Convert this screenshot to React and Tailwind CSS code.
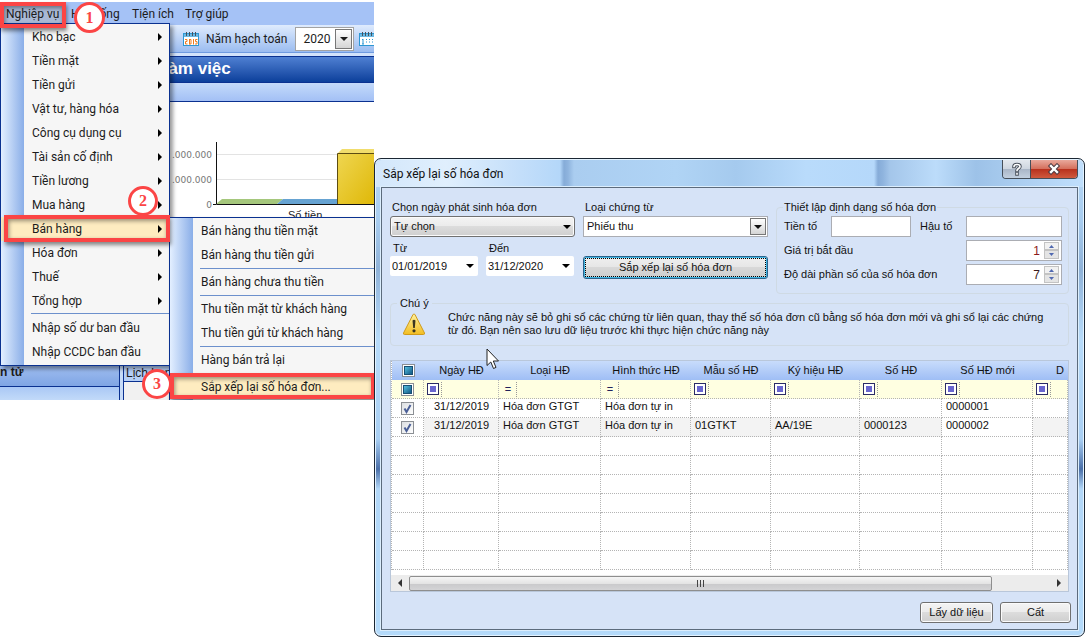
import { Fragment } from 'react';

const menuItems = [
  'Kho bạc', 'Tiền mặt', 'Tiền gửi', 'Vật tư, hàng hóa', 'Công cụ dụng cụ', 'Tài sản cố định',
  'Tiền lương', 'Mua hàng', 'Bán hàng', 'Hóa đơn', 'Thuế', 'Tổng hợp',
];
const subGroups = [
  ['Bán hàng thu tiền mặt', 'Bán hàng thu tiền gửi'],
  ['Bán hàng chưa thu tiền'],
  ['Thu tiền mặt từ khách hàng', 'Thu tiền gửi từ khách hàng'],
  ['Hàng bán trả lại'],
  ['Sắp xếp lại số hóa đơn...'],
];
const columns = [
  { label: 'Ngày HĐ', width: 'w-[75px]', filter: 'box' },
  { label: 'Loại HĐ', width: 'w-[102px]', filter: 'eq' },
  { label: 'Hình thức HĐ', width: 'w-[90px]', filter: 'eq' },
  { label: 'Mẫu số HĐ', width: 'w-[80px]', filter: 'box' },
  { label: 'Ký hiệu HĐ', width: 'w-[89px]', filter: 'box' },
  { label: 'Số HĐ', width: 'w-[82px]', filter: 'box' },
  { label: 'Số HĐ mới', width: 'w-[91px]', filter: 'box' },
  { label: 'D', width: 'w-auto', filter: 'box' },
];
const rows = [
  ['31/12/2019', 'Hóa đơn GTGT', 'Hóa đơn tự in', '', '', '', '0000001', ''],
  ['31/12/2019', 'Hóa đơn GTGT', 'Hóa đơn tự in', '01GTKT', 'AA/19E', '0000123', '0000002', ''],
];
const emptyRows = [0, 1, 2, 3, 4, 5, 6];
const cell = 'border-r border-b border-dotted border-[#b4b4b4]';

function Triangle({ dir = 'down', className = '' }) {
  const d = { down: 'M0 0H8L4 4Z', right: 'M1 0L5 4L1 8Z', left: 'M5 0L1 4L5 8Z' }[dir];
  return (
    <svg viewBox="0 0 8 8" className={`size-2 shrink-0 ${className}`} aria-hidden="true">
      <path d={d} transform={dir === 'down' ? 'translate(0 2)' : 'translate(1 0)'} fill="currentColor" />
    </svg>
  );
}

function Step({ n, className }) {
  return (
    <span className={`absolute z-30 flex items-center justify-center rounded-full border-[3px] border-[#fb4545] bg-white font-[Liberation_Serif,serif] text-base font-bold text-[#fb4545] ${className}`}>
      {n}
    </span>
  );
}

function Marker({ className }) {
  return <span className={`pointer-events-none absolute z-20 border-4 border-[#fb4545] shadow-[1px_3px_4px_rgba(0,0,0,0.45),inset_1px_2px_4px_rgba(0,0,0,0.4)] ${className}`} />;
}

function CalendarIcon({ year }) {
  return (
    <svg viewBox="0 0 16 16" className="size-4 shrink-0" aria-hidden="true">
      <rect x="0.5" y="2.5" width="15" height="12" fill="#fff" stroke="#2d97d3" />
      <path d="M1 3h14v3H1z" fill="#6cb9e4" />
      <path d="M3.5 1v4M6.5 1v4M9.5 1v4M12.5 1v4" stroke="#45525e" />
      {year ? (
        <path d="M2 8.5h2v2H2.500v2.500h2M6.500 8v5.500M6.500 8.500h1.500v4.500H6.500M10.500 8v5.500M14.500 8.500H12.500v2h1.500v2.500h-2" fill="none" stroke="#f07c1e" />
      ) : (
        <path d="M3 9l1-1v5M3 13h2M7 8.500h1M10 8.500h1M13 8.500h1M7 11h1M10 11h1M13 11h1" fill="none" stroke="#2d97d3" />
      )}
    </svg>
  );
}

function Rail({ children, className }) {
  return (
    <ul className={`absolute z-10 border border-[#0a3190] bg-[#f6f6f6] bg-[linear-gradient(90deg,#e3efff,#8aaee8)] bg-[length:23px_100%] bg-no-repeat py-px shadow-[3px_3px_4px_rgba(0,0,0,0.4)] ${className}`}>
      {children}
    </ul>
  );
}

function Chart() {
  return (
    <svg viewBox="170 101 204 117" className="absolute top-0 right-0 h-[117px] w-[204px]" aria-label="Số tiền">
      <path d="M217 153.500H374M217 178.500H374" stroke="#e3e3e3" />
      <path d="M216 203l6-5h61l-6 5z" fill="#a5c77c" />
      <path d="M277 203l6-5h61l-6 5z" fill="#66a3d2" />
      <defs>
        <linearGradient id="bar" x1="0" y1="0" x2="1" y2="1">
          <stop offset="0" stopColor="#efd651" />
          <stop offset="1" stopColor="#dfb808" />
        </linearGradient>
      </defs>
      <path d="M338 152l4-4h32v4z" fill="#f1dd6c" />
      <path d="M337.500 203V152.500H374V203z" fill="url(#bar)" />
      <path d="M337.500 203V152.500H374" fill="none" stroke="#5c4c12" />
      <path d="M216.500 141V203.500H374M213 203.500h3" fill="none" stroke="#111" />
      <g className="font-[DejaVu_Sans,sans-serif] text-[9px]" fill="#777">
        <text x="212" y="157" textAnchor="end">.000.000</text>
        <text x="212" y="182" textAnchor="end">.000.000</text>
        <text x="212" y="207" textAnchor="end">0</text>
      </g>
      <text x="288" y="218" className="font-[Liberation_Sans,sans-serif] text-[11px]" fill="#222">Số tiền</text>
    </svg>
  );
}

function MainWindow() {
  return (
    <section className="relative flex h-[400px] w-[374px] shrink-0 flex-col overflow-hidden pt-[2px] font-[Roboto,sans-serif] text-xs text-[#1c1c1c]">
      <nav className="flex h-[23px] shrink-0 items-center bg-[#a5c2f6]">
        <button className="flex h-full w-[66px] items-center bg-[#a9b9d6] pl-[6px]">Nghiệp vụ</button>
        <button className="w-[60px] pl-[5px] text-left">Hệ thống</button>
        <button className="ml-[6px] w-[53px] text-left">Tiện ích</button>
        <button>Trợ giúp</button>
      </nav>
      <div className="flex h-7 shrink-0 items-center border-b border-[#6f9be0] bg-linear-to-b from-[#dfebfd] to-[#9bbcf0] pl-[178px]">
        <span className="h-4 w-px bg-[#6a9ad8]" />
        <span className="ml-[5px]"><CalendarIcon year /></span>
        <label htmlFor="year" className="ml-[7px] whitespace-nowrap">Năm hạch toán</label>
        <div className="relative ml-2 flex h-6 w-[59px] shrink-0 items-center border border-[#a3a3a3] bg-white">
          <select id="year" className="h-full w-full appearance-none pl-[7px] outline-none"><option>2020</option></select>
          <span className="pointer-events-none absolute right-px flex h-5 w-[17px] items-center justify-center border border-[#777] bg-linear-to-b from-white to-[#d5d5d5]"><Triangle /></span>
        </div>
        <span className="ml-[5px]"><CalendarIcon /></span>
      </div>
      <div className="h-[3px] shrink-0 bg-[#d2e3fb]" />
      <h1 className="flex h-[27px] shrink-0 items-center border-y border-[#0a3190] bg-linear-to-b from-[#4f80d2] to-[#0b3f9b] pl-[158px] font-[Liberation_Sans,sans-serif] text-[17px] font-bold text-white">Làm việc</h1>
      <div className="h-[19px] shrink-0 border-b border-[#0a3190] bg-linear-to-b from-[#c4dafa] to-[#a3c0f5]" />
      <div className="relative grow"><Chart /></div>
      <div className="flex h-[34px] shrink-0">
        <div className="flex w-[120px] flex-col border-r border-[#0a3190]">
          <h2 className="h-5 bg-linear-to-b from-[#9fbdf0] to-[#7fa5e4] font-[Liberation_Sans,sans-serif] text-xs leading-3 font-bold">n tử</h2>
          <div className="grow border-t border-[#0a3190] bg-linear-to-b from-[#aac8f5] to-[#c2daf9]" />
        </div>
        <div className="w-[3px] bg-[#c7dbf8]" />
        <div className="flex grow flex-col border-l border-[#0a3190] bg-[#f1f1f1]">
          <h2 className="h-4 border-b border-[#0a3190] bg-[#b5cff7] pl-[2px] font-[Liberation_Sans,sans-serif] text-xs leading-[14px]">Lịch hẹn</h2>
        </div>
      </div>

      <Rail className="top-[23px] left-0 w-[170px]">
        {menuItems.map((item) => (
          <li key={item}>
            <button className={`flex h-6 w-full items-center justify-between pr-[5px] pl-[31px] ${item === 'Bán hàng' ? 'bg-[#feecc0]' : ''}`}>
              {item}
              <Triangle dir="right" className="text-black" />
            </button>
          </li>
        ))}
        <li className="ml-[30px] h-[3px] border-t border-[#6c90cc]" />
        <li><button className="flex h-6 w-full items-center pl-[31px]">Nhập số dư ban đầu</button></li>
        <li><button className="flex h-6 w-full items-center pl-[31px]">Nhập CCDC ban đầu</button></li>
      </Rail>

      <Rail className="top-[217px] left-[169px] w-[210px]">
        {subGroups.map((group, i) => (
          <Fragment key={group[0]}>
            {i > 0 && <li className="ml-[30px] flex h-[3px] items-center"><span className="h-px w-full bg-[#6c90cc]" /></li>}
            {group.map((item) => (
              <li key={item}>
                <button className={`flex h-6 w-full items-center pl-[31px] ${i === 4 ? 'bg-[#feecc0]' : ''}`}>{item}</button>
              </li>
            ))}
          </Fragment>
        ))}
      </Rail>

      <Marker className="top-[2px] left-0 h-[26px] w-[66px]" />
      <Marker className="top-[215px] left-[4px] h-[27px] w-[166px]" />
      <Marker className="top-[373px] left-[170px] h-[26px] w-[205px]" />
      <Step n="1" className="top-[2px] left-[74px] size-[31px]" />
      <Step n="2" className="top-[186px] left-[128px] size-[30px]" />
      <Step n="3" className="top-[369px] left-[142px] size-[30px]" />
    </section>
  );
}

function HeaderBox() {
  return (
    <span className="mx-auto flex size-[13px] items-center justify-center border border-[#8b8f94] bg-white">
      <span className="size-[9px] border border-[#174f74] bg-linear-to-br from-[#56c0e0] to-[#125a86]" />
    </span>
  );
}

function InvoiceTable() {
  return (
    <div className="flex grow flex-col border border-[#b9c7da] bg-white">
      <div className="overflow-hidden">
        <table className="w-full table-fixed border-separate border-spacing-0 border-l border-dotted border-[#b4b4b4]">
          <thead>
            <tr className="h-[19px] bg-linear-to-b from-[#c8dcfb] to-[#9fbef5]">
              <th className="w-[32px] p-0"><HeaderBox /></th>
              {columns.map((c) => (
                <th key={c.label} className={`${c.width} overflow-hidden p-0 text-center font-normal whitespace-nowrap ${c.label === 'D' ? 'pl-[19px]' : ''}`}>{c.label}</th>
              ))}
            </tr>
            <tr className="h-[19px] bg-[#ffffe1]">
              <td className={`${cell} p-0`}><HeaderBox /></td>
              {columns.map((c) => (
                <td key={c.label} className={`${cell} p-0`}>
                  <div className="flex h-[18px] items-center pl-[3px]">
                    {c.filter === 'box' ? (
                      <span className="flex size-3 items-center justify-center border border-[#2b2b66] bg-white"><span className="size-[6px] bg-[#6a67cf]" /></span>
                    ) : (
                      <span className="w-3 text-center text-[#22225c]">=</span>
                    )}
                    <span className="ml-[2px] h-[15px] border-l border-dotted border-[#999]" />
                  </div>
                </td>
              ))}
            </tr>
          </thead>
          <tbody>
            {rows.map((r, i) => (
              <tr key={r[6]} className="h-[19px]">
                <td className={`${cell} p-0 align-middle`}>
                  <label className="relative mx-auto flex size-[13px] items-center justify-center">
                    <input type="checkbox" defaultChecked aria-label={`Chọn ${r[6]}`} className="size-[13px] appearance-none border border-[#8b8f94] bg-linear-to-br from-[#dcdfe2] to-white" />
                    <svg viewBox="0 0 13 13" className="pointer-events-none absolute inset-0" aria-hidden="true"><path d="M3.500 6.500L5.500 10L9.500 3" fill="none" stroke="#4a5f97" strokeWidth="2" /></svg>
                  </label>
                </td>
                {r.map((v, j) => (
                  <td key={columns[j].label} className={`${cell} overflow-hidden p-0 pb-[3px] leading-[15px] whitespace-nowrap ${j === 0 ? 'pl-[10px]' : 'pl-1'} ${i === 1 && j !== 6 ? 'bg-[#f3f3f3]' : ''}`}>{v}</td>
                ))}
              </tr>
            ))}
            {emptyRows.map((n) => (
              <tr key={n} className="h-[19px]">
                <td className={`${cell} p-0`} />
                {columns.map((c) => <td key={c.label} className={`${cell} p-0`} />)}
              </tr>
            ))}
          </tbody>
        </table>
      </div>
      <div className="mt-auto flex h-4 items-center bg-[#ececec] px-[5px]">
        <Triangle dir="left" className="text-[#333]" />
        <div className="mx-[5px] flex grow">
          <div className="flex h-[15px] w-[91%] items-center justify-center gap-[2px] rounded-[2px] border border-[#8e8e8e] bg-[linear-gradient(#f6f6f6_0%,#e4e4e4_50%,#c9c9cb_51%,#d4d4d6_100%)]">
            <span className="h-[7px] w-px bg-[#444]" /><span className="h-[7px] w-px bg-[#444]" /><span className="h-[7px] w-px bg-[#444]" />
          </div>
        </div>
        <Triangle dir="right" className="text-[#333]" />
      </div>
    </div>
  );
}

function Spinner({ id, label, value, red }) {
  return (
    <div className="flex h-[21px] items-center">
      <label htmlFor={id} className="grow">{label}</label>
      <div className="flex h-[21px] w-24 items-center border border-[#abadb3] bg-white pr-[2px]">
        <input id={id} defaultValue={value} className={`w-full min-w-0 pr-1 text-right text-xs outline-none ${red ? 'text-[#8b1a1a]' : 'text-[#3a1a1a]'}`} />
        <span className="flex h-[17px] w-[15px] shrink-0 flex-col">
          <button aria-label={`Tăng ${label}`} className="flex h-2 items-center justify-center border border-[#c3c3c3] bg-[#f1f1f1]"><svg viewBox="0 0 5 3" className="h-[3px] w-[5px]"><path d="M0 3L2.500 0L5 3z" fill="#5068b0" /></svg></button>
          <button aria-label={`Giảm ${label}`} className="flex h-[9px] items-center justify-center border border-[#c3c3c3] bg-[#e4e4e4]"><svg viewBox="0 0 5 3" className="h-[3px] w-[5px]"><path d="M0 0L2.500 3L5 0z" fill="#5068b0" /></svg></button>
        </span>
      </div>
    </div>
  );
}

function DateBox({ id, label, value }) {
  return (
    <div className="flex w-[88px] flex-col">
      <label htmlFor={id} className="pl-[3px] leading-4">{label}</label>
      <div className="relative flex h-5 items-center rounded-[2px] bg-white">
        <input id={id} defaultValue={value} className="w-full min-w-0 bg-transparent pl-[2px] text-[11px] outline-none" />
        <Triangle className="absolute right-1 text-black" />
      </div>
    </div>
  );
}

const winButton = 'rounded-[3px] border border-[#707070] bg-[linear-gradient(#f4f4f4_0%,#ebebeb_49%,#dcdcdc_50%,#cfcfcf_100%)] shadow-[inset_0_0_0_1px_#fbfbfb]';

function ReorderDialog() {
  return (
    <section role="dialog" aria-labelledby="dialog-title" className="mt-[158px] flex min-w-0 grow flex-col rounded-[7px] border border-[#1b2633] bg-[linear-gradient(180deg,#b9d8f6_0px,#a8cdf0_60px,#8fb2d8_110px,#b7dbfa_180px,#a9cff3_280px,#4a6fa8_310px,#b2d7f8_330px,#b4dafa_100%)] px-[6px] pb-[6px] font-[Liberation_Sans,sans-serif] text-[11px] text-[#111] shadow-[inset_0_0_0_1px_#e4f3ff]">
      <header className="-mx-[5px] mt-px flex h-[27px] items-start justify-between rounded-t-[6px] bg-[linear-gradient(90deg,#d3e7fb_0px,#e0effd_70px,#c5dffa_140px,#b4d7f9_184px,#86acd8_188px,#8fb4de_192px,#aacdf0_198px,#b0d4f5_300px,#a5caee_360px,#b9dbfb_430px,#b5d8fa_498px,#86acd8_502px,#8fb4de_507px,#a4c6ea_514px,#bcdcfa_560px,#9dc2e8_600px,#c0dffc_100%)] pr-[5px] pl-[7px]">
        <h2 id="dialog-title" className="self-center font-[Roboto,sans-serif] text-xs">Sắp xếp lại số hóa đơn</h2>
        <div className="flex h-[19px] overflow-hidden rounded-b-[4px] border border-t-0 border-[#454e59]">
          <button aria-label="Trợ giúp" className="flex w-[28px] items-center justify-center border-r border-[#454e59] bg-[linear-gradient(#e3e8ee_0%,#ced6e0_48%,#a9b5c6_50%,#c3d0df_100%)]">
            <svg viewBox="0 0 12 14" className="h-[14px] w-3"><g fill="none" strokeLinecap="square"><path d="M3 4.500C3 2 9 1.500 9 4.500C9 6.500 6 6.500 6 8.500M6 11.500V12" stroke="#4c535e" strokeWidth="3.600" /><path d="M3 4.500C3 2 9 1.500 9 4.500C9 6.500 6 6.500 6 8.500M6 11.500V12" stroke="#fff" strokeWidth="1.600" /></g></svg>
          </button>
          <button aria-label="Đóng" className="flex w-[46px] items-center justify-center bg-[linear-gradient(#e9a99c_0%,#d5705d_48%,#b8301c_50%,#cf5a3e_100%)]">
            <svg viewBox="0 0 14 12" className="h-3 w-[14px]"><g fill="none" strokeLinecap="square"><path d="M4 3L10 9M10 3L4 9" stroke="#4c3a42" strokeWidth="4.400" /><path d="M4 3L10 9M10 3L4 9" stroke="#fff" strokeWidth="2.400" /></g></svg>
          </button>
        </div>
      </header>

      <div className="flex grow flex-col border border-[#5c6b7c] bg-[#d6e3f7] px-2 pb-[5px] shadow-[0_0_0_1px_#dceefd]">
        <div className="flex pt-[11px]">
          <div className="flex w-[185px] shrink-0 flex-col">
            <label htmlFor="range" className="pl-[2px] leading-[17px]">Chọn ngày phát sinh hóa đơn</label>
            <div className="relative flex h-[21px] items-center">
              <select id="range" className={`h-[21px] w-full appearance-none pl-[3px] ${winButton}`}><option>Tự chọn</option></select>
              <Triangle className="pointer-events-none absolute right-1 text-black" />
            </div>
            <div className="mt-[3px] flex gap-2">
              <DateBox id="from" label="Từ" value="01/01/2019" />
              <DateBox id="to" label="Đến" value="31/12/2020" />
            </div>
          </div>
          <div className="ml-2 flex w-[185px] shrink-0 flex-col">
            <label htmlFor="voucher" className="pl-[2px] leading-[17px]">Loại chứng từ</label>
            <div className="relative flex h-[21px] items-center border border-[#abadb3] bg-white">
              <select id="voucher" className="h-full w-full appearance-none pl-[3px] outline-none"><option>Phiếu thu</option></select>
              <span className="pointer-events-none absolute right-px flex h-[17px] w-4 items-center justify-center border border-[#777] bg-linear-to-b from-white to-[#d5d5d5]"><Triangle /></span>
            </div>
            <button className="mt-[19px] h-[23px] rounded-[3px] border border-[#2c628b] bg-[linear-gradient(#efefef_0%,#e6e6e6_49%,#d8d8d8_50%,#cdcdcd_100%)] p-px shadow-[inset_0_0_0_1px_#3fb6e4]">
              <span className="flex h-full items-center justify-center border border-dotted border-black">Sắp xếp lại số hóa đơn</span>
            </button>
          </div>
          <fieldset className="-mb-[7px] ml-2 min-w-0 grow rounded-[4px] border border-[#cfdae4] pr-[6px] pb-[8px] pl-[7px]">
            <legend className="-ml-px px-px leading-[17px]">Thiết lập định dạng số hóa đơn</legend>
            <div className="flex flex-col gap-[3px]">
              <div className="flex h-[21px] items-center">
                <label htmlFor="prefix" className="w-[47px]">Tiền tố</label>
                <input id="prefix" className="h-[21px] w-20 border border-[#abadb3] bg-white px-1 outline-none" />
                <label htmlFor="suffix" className="ml-auto w-[46px]">Hậu tố</label>
                <input id="suffix" className="h-[21px] w-24 border border-[#abadb3] bg-white px-1 outline-none" />
              </div>
              <Spinner id="start" label="Giá trị bắt đầu" value="1" red />
              <Spinner id="length" label="Độ dài phần số của số hóa đơn" value="7" />
            </div>
          </fieldset>
        </div>

        <fieldset className="mt-2 rounded-[4px] border border-[#cfdae4] pb-[8px]">
          <legend className="ml-[6px] px-[3px] leading-4">Chú ý</legend>
          <div className="flex items-center pl-[11px]">
            <svg viewBox="0 0 24 24" className="size-6 shrink-0" aria-hidden="true">
              <defs><linearGradient id="warn" x1="0" y1="0" x2="0" y2="1"><stop offset="0" stopColor="#fff2a0" /><stop offset="1" stopColor="#f2bd22" /></linearGradient></defs>
              <path d="M12 2Q12.800 2 13.200 3L22.500 21Q22.800 22.500 21.500 22.500H2.500Q1.200 22.500 1.500 21L10.800 3Q11.200 2 12 2Z" fill="url(#warn)" stroke="#cf9a1b" />
              <path d="M10.500 8.500Q12 7 13.500 8.500L12.800 16H11.200Z" fill="#3c3620" />
              <circle cx="12" cy="18.800" r="1.600" fill="#3c3620" />
            </svg>
            <p className="ml-[22px] max-w-[600px] leading-[13px]">Chức năng này sẽ bỏ ghi sổ các chứng từ liên quan, thay thế số hóa đơn cũ bằng số hóa đơn mới và ghi sổ lại các chứng từ đó. Bạn nên sao lưu dữ liệu trước khi thực hiện chức năng này</p>
          </div>
        </fieldset>

        <div className="relative mt-[14px] flex h-[232px] flex-col">
          <InvoiceTable />
          <svg viewBox="0 0 14 22" className="absolute -top-[12px] left-[96px] h-[22px] w-[14px]" aria-hidden="true">
            <path d="M1 1V17.500L4.800 14L7.500 20.500L10 19.400L7.300 13H12.500Z" fill="#fff" stroke="#222" />
          </svg>
        </div>

        <div className="mt-[10px] -mr-[2px] flex justify-end gap-[7px]">
          <button className={`h-[21px] w-[73px] ${winButton}`}>Lấy dữ liệu</button>
          <button className={`h-[21px] w-[71px] ${winButton}`}>Cất</button>
        </div>
      </div>
    </section>
  );
}

export default function App() {
  return (
    <main className="flex min-h-screen bg-white pr-px">
      <MainWindow />
      <ReorderDialog />
    </main>
  );
}
